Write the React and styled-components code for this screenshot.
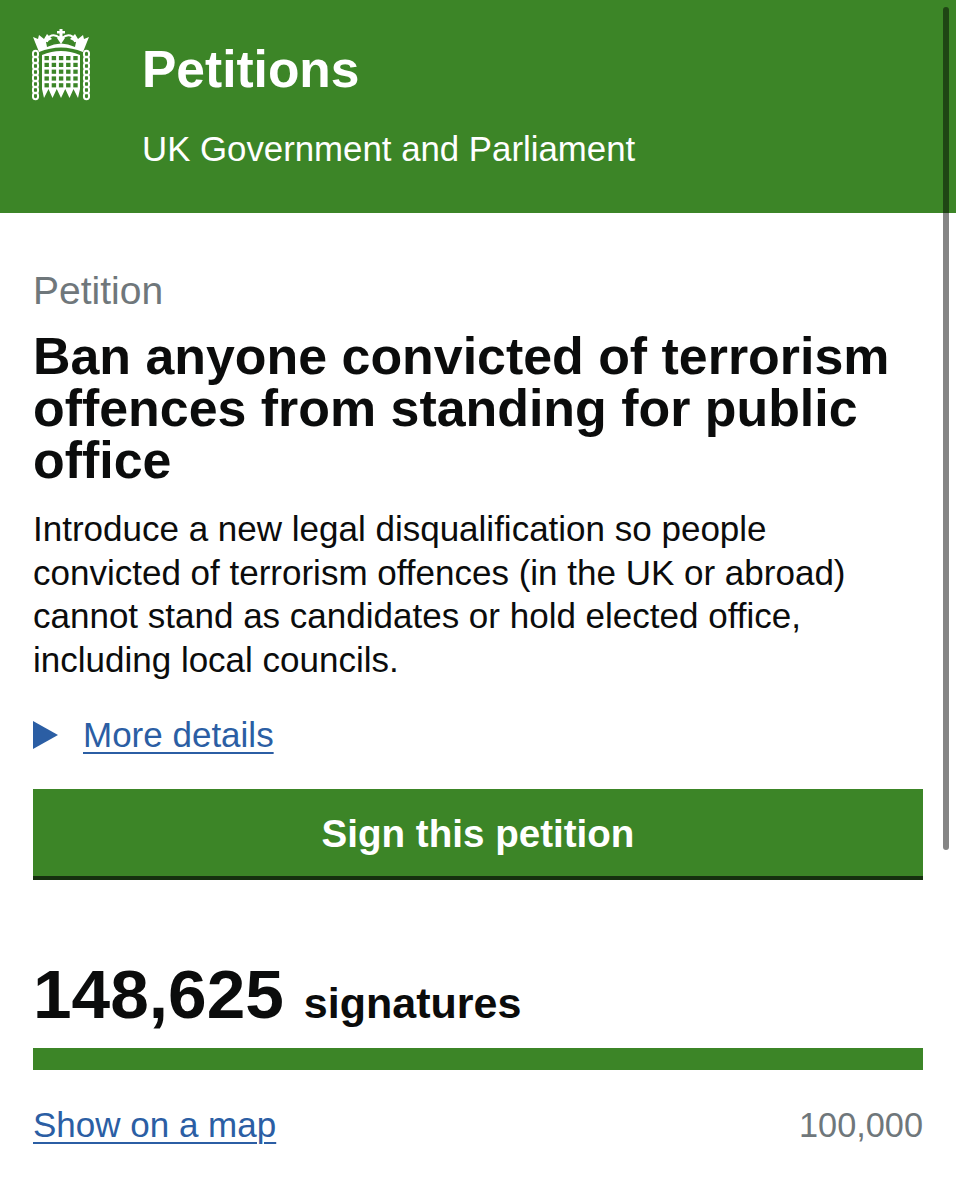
import React from 'react'
import styled, { createGlobalStyle } from 'styled-components'

const Global = createGlobalStyle`
  html, body { margin: 0; padding: 0; background: #fff; }
  body { font-family: "Liberation Sans", Arial, sans-serif; color: #0b0c0c; }
`

function Portcullis() {
  const cells = []
  for (let r = 0; r < 5; r++) {
    for (let c = 0; c < 5; c++) {
      cells.push(<rect key={r + '-' + c} x={12.5 + c * 7.2} y={27 + r * 6.8} width="4.400" height="4.200" fill="#3c8527" />)
    }
  }
  const links = [25, 31, 37, 43, 49, 55, 61, 67]
  return (
    <svg width="58" height="72" viewBox="0 0 58 72">
      <g fill="#fff">
        <path d="M27.500 7 L27.500 4.500 L25 4.500 L25 2 L27.500 2 L27.500 0 L30.500 0 L30.500 2 L33 2 L33 4.500 L30.500 4.500 L30.500 7 Z" />
        <path d="M1 8 L6 10 L7 6 L12 10 L15 5 L20 10 L14 13 L15 18 Q29 11 43 18 L44 13 L38 10 L43 5 L46 10 L51 6 L52 10 L57 8 L51 23 Q29 14 7 23 Z" />
        <path d="M29 6 L33 9 L29 15 L25 9 Z" />
        <path d="M10 26 Q29 18 48 26 L48 60 L46 69 L41.500 60 L37.500 69 L33.250 60 L29 69 L24.750 60 L20.500 69 L16.500 60 L12 69 L10 60 Z" />
      </g>
      <g fill="none" stroke="#fff" strokeWidth="2">
        <path d="M28 9 C22 4 16 6 15 13" />
        <path d="M30 9 C36 4 42 6 43 13" />
      </g>
      {cells}
      <g fill="none" stroke="#fff" strokeWidth="2">
        {links.map(y => <ellipse key={'l' + y} cx="3.500" cy={y} rx="2.600" ry="3.300" />)}
        {links.map(y => <ellipse key={'r' + y} cx="54.500" cy={y} rx="2.600" ry="3.300" />)}
      </g>
    </svg>
  )
}

export default function App() {
  return (
    <Page>
      <Global />
      <Header>
        <LogoSlot><Portcullis /></LogoSlot>
        <Brand>
          <SiteName>Petitions</SiteName>
          <SiteSub>UK Government and Parliament</SiteSub>
        </Brand>
      </Header>
      <Main>
        <Eyebrow>Petition</Eyebrow>
        <Title>Ban anyone convicted of terrorism offences from standing for public office</Title>
        <Lede>
          Introduce a new legal disqualification so people<br />
          convicted of terrorism offences (in the UK or abroad)<br />
          cannot stand as candidates or hold elected office,<br />
          including local councils.
        </Lede>
        <Details>
          <Arrow />
          <BlueLink href="#">More details</BlueLink>
        </Details>
        <SignButton>Sign this petition</SignButton>
        <Count>
          <CountNumber>148,625</CountNumber>
          <CountLabel>signatures</CountLabel>
        </Count>
        <Bar />
        <BarFoot>
          <BlueLink href="#">Show on a map</BlueLink>
          <Threshold>100,000</Threshold>
        </BarFoot>
      </Main>
      <ScrollThumb />
    </Page>
  )
}

const Page = styled.div`
  position: relative;
  width: 956px;
  height: 1200px;
  overflow: hidden;
  background: #fff;
`
const Header = styled.header`
  display: flex;
  height: 213px;
  box-sizing: border-box;
  padding: 29px 0 0 32px;
  background: #3c8527;
  color: #fff;
`
const LogoSlot = styled.div`
  width: 110px;
  flex: none;
`
const Brand = styled.div`
  display: flex;
  flex-direction: column;
`
const SiteName = styled.div`
  font-size: 51.500px;
  font-weight: 700;
  line-height: 80px;
`
const SiteSub = styled.div`
  margin-top: 20px;
  font-size: 34.800px;
  line-height: 40px;
`
const Main = styled.main`
  display: flex;
  flex-direction: column;
  padding: 57px 33px 0;
`
const Eyebrow = styled.div`
  font-size: 39px;
  line-height: 42px;
  color: #6f777b;
`
const Title = styled.h1`
  margin: 18px 0 0;
  font-size: 51.900px;
  line-height: 52px;
  font-weight: 700;
  color: #0b0c0c;
`
const Lede = styled.p`
  margin: 21px 0 0;
  font-size: 35px;
  line-height: 43.500px;
  color: #0b0c0c;
  white-space: nowrap;
`
const Details = styled.div`
  display: flex;
  align-items: center;
  gap: 25px;
  margin-top: 32px;
`
const Arrow = styled.span`
  width: 0;
  height: 0;
  border-style: solid;
  border-width: 14px 0 14px 25px;
  border-color: transparent transparent transparent #2b5ea4;
`
const BlueLink = styled.a`
  font-size: 35px;
  line-height: 44px;
  color: #2b5ea4;
  text-decoration: underline;
  text-decoration-thickness: 2px;
  text-underline-offset: 5px;
`
const SignButton = styled.button`
  height: 91px;
  margin-top: 32px;
  padding: 2px 0 0;
  border: 0;
  border-bottom: 4px solid #16300f;
  background: #3c8527;
  color: #fff;
  font-family: inherit;
  font-size: 38.600px;
  font-weight: 700;
`
const Count = styled.div`
  display: flex;
  align-items: baseline;
  gap: 20px;
  margin-top: 76px;
`
const CountNumber = styled.span`
  font-size: 69.400px;
  line-height: 76px;
  font-weight: 700;
`
const CountLabel = styled.span`
  font-size: 43px;
  font-weight: 700;
`
const Bar = styled.div`
  height: 22px;
  margin-top: 16px;
  background: #3c8527;
`
const BarFoot = styled.div`
  display: flex;
  justify-content: space-between;
  align-items: center;
  margin-top: 33px;
`
const Threshold = styled.span`
  font-size: 34.300px;
  color: #6f777b;
`
const ScrollThumb = styled.div`
  position: absolute;
  top: 7px;
  left: 943px;
  width: 6px;
  height: 843px;
  border-radius: 3px;
  background: rgba(0, 0, 0, 0.48);
`
